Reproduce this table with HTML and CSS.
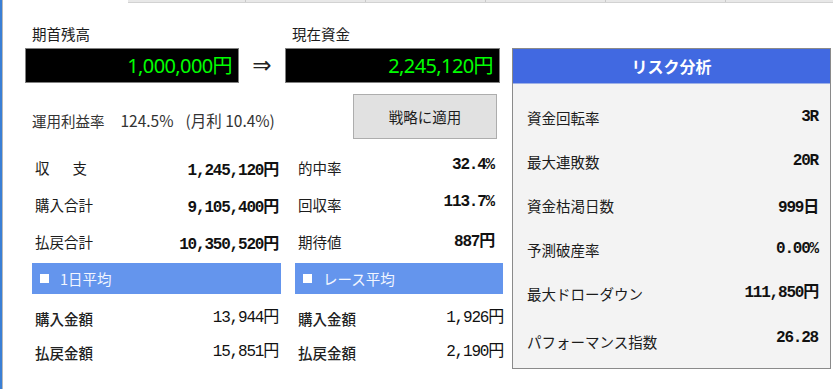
FILE: index.html
```html
<!DOCTYPE html>
<html lang="ja">
<head>
<meta charset="utf-8">
<title>資金管理</title>
<link rel="stylesheet" href="styles.css">
</head>
<body>
<div class="page">
  <div class="tabs">
    <div class="tab first"></div><div class="tab"></div><div class="tab"></div><div class="tab"></div><div class="tab"></div><div class="tab last"></div>
  </div>
  <div class="main">
    <div class="left">
      <div class="fund-row">
        <div class="field f1">
          <div class="field-label">期首残高</div>
          <div class="lcd">1,000,000円</div>
        </div>
        <div class="arrow">⇒</div>
        <div class="field f2">
          <div class="field-label">現在資金</div>
          <div class="lcd">2,245,120円</div>
        </div>
      </div>
      <div class="rate-row">
        <div class="rate"><span class="rate-lbl">運用利益率</span><span class="rate-num">124.5%</span><span class="rate-sub">(月利 10.4%)</span></div>
        <button class="apply">戦略に適用</button>
      </div>
      <div class="stats">
        <div class="stat c1"><span class="lbl">収<span class="sp"></span>支</span><span class="val b">1,245,120円</span></div>
        <div class="stat c2"><span class="lbl">的中率</span><span class="val b up">32.4%</span></div>
        <div class="stat c1"><span class="lbl">購入合計</span><span class="val b">9,105,400円</span></div>
        <div class="stat c2"><span class="lbl">回収率</span><span class="val b up">113.7%</span></div>
        <div class="stat c1"><span class="lbl">払戻合計</span><span class="val b">10,350,520円</span></div>
        <div class="stat c2"><span class="lbl">期待値</span><span class="val b up">887円</span></div>
      </div>
      <div class="avg-heads">
        <div class="bar b1"><span class="sq"></span>1日平均</div>
        <div class="bar b2"><span class="sq"></span>レース平均</div>
      </div>
      <div class="avgs">
        <div class="stat a1"><span class="lbl">購入金額</span><span class="val up">13,944円</span></div>
        <div class="stat a2"><span class="lbl">購入金額</span><span class="val up">1,926円</span></div>
        <div class="stat a1"><span class="lbl">払戻金額</span><span class="val up">15,851円</span></div>
        <div class="stat a2"><span class="lbl">払戻金額</span><span class="val up">2,190円</span></div>
      </div>
    </div>
    <div class="risk">
      <div class="risk-head">リスク分析</div>
      <div class="risk-body">
        <div class="rrow"><span class="lbl">資金回転率</span><span class="val b">3R</span></div>
        <div class="rrow"><span class="lbl">最大連敗数</span><span class="val b">20R</span></div>
        <div class="rrow"><span class="lbl">資金枯渇日数</span><span class="val b">999日</span></div>
        <div class="rrow"><span class="lbl">予測破産率</span><span class="val b">0.00%</span></div>
        <div class="rrow"><span class="lbl">最大ドローダウン</span><span class="val b up">111,850円</span></div>
        <div class="rrow last"><span class="lbl">パフォーマンス指数</span><span class="val b up">26.28</span></div>
      </div>
    </div>
  </div>
</div>
</body>
</html>
```

FILE: styles.css
```css
* { box-sizing: border-box; }
html, body { margin: 0; padding: 0; background: #ffffff; }
body {
  width: 833px;
  height: 389px;
  overflow: hidden;
  font-family: "Noto Sans CJK JP", "Noto Sans", sans-serif;
  font-size: 14.5px;
  color: #1c1c1c;
}
.page {
  height: 389px;
  border-left: 2px solid #3a7fd5;
  box-shadow: inset 1px 0 0 #b9b9b9;
}
.tabs {
  display: flex;
  height: 3px;
  margin-left: 126px;
  background: #e8e8e8;
  border-bottom: 1px solid #d2d2d2;
}
.tab { width: 120px; border-left: 1px solid #c9c9c9; }
.tab.first { width: 117px; border-left: none; }
.tab.last { flex: 1; }

.main {
  display: flex;
  padding: 21px 0 0 23px;
  gap: 9px;
}
.left { width: 478px; }

.fund-row { display: flex; align-items: flex-end; }
.field { display: flex; flex-direction: column; }
.f1 { width: 214px; }
.f2 { width: 215px; }
.field-label {
  height: 20px;
  line-height: 20px;
  padding-left: 7px;
  margin-bottom: 4px;
}
.lcd {
  height: 35px;
  background: #000;
  border: 1px solid #808080;
  color: #00ff00;
  font-family: "Noto Sans", "Noto Sans CJK JP", sans-serif;
  font-size: 20px;
  letter-spacing: -0.6px;
  line-height: 33px;
  text-align: right;
  padding-right: 6px;
}
.arrow {
  width: 46px;
  height: 35px;
  line-height: 35px;
  text-align: center;
  font-size: 23px;
  font-family: "DejaVu Sans", sans-serif;
  color: #222;
}

.rate-row {
  display: flex;
  align-items: center;
  height: 45px;
  margin-top: 11px;
}
.rate { display: flex; align-items: baseline; padding: 6px 0 0 7px; color: #333; }
.rate-lbl { font-size: 14.5px; }
.rate-num { font-size: 15.5px; margin-left: 16px; }
.rate-sub { font-size: 15.5px; margin-left: 12px; }
.apply {
  margin-left: auto;
  margin-right: 6px;
  width: 144px;
  height: 45px;
  background: #e1e1e1;
  border: 1px solid #adadad;
  font-family: "Noto Sans CJK JP", sans-serif;
  font-size: 14.5px;
  color: #1c1c1c;
  padding: 0;
}

.stats {
  display: grid;
  grid-template-columns: 252px 195px;
  grid-auto-rows: 37px;
  column-gap: 21px;
  margin-top: 10px;
}
.stat { display: flex; align-items: center; justify-content: space-between; }
.stat.c1 { padding-left: 10px; }
.sp { display: inline-block; width: 23px; }
.val {
  font-family: "Liberation Mono", "Noto Sans CJK JP", monospace;
  font-size: 16px;
  letter-spacing: -1.2px;
  margin-right: -1px;
  color: #111;
}
.val.b { font-weight: bold; }
.val.up { position: relative; top: -3px; }

.avg-heads {
  display: flex;
  gap: 14px;
  margin-top: 3px;
  padding-left: 7px;
}
.bar {
  height: 31px;
  background: #6495ed;
  color: #f2f6ff;
  font-size: 14.5px;
  display: flex;
  align-items: center;
}
.b1 { width: 249px; }
.b2 { width: 208px; }
.sq {
  width: 9px;
  height: 9px;
  background: #ffffff;
  margin: 0 11px 0 8px;
}

.avgs {
  display: grid;
  grid-template-columns: 252px 204px;
  grid-auto-rows: 34px;
  column-gap: 21px;
  margin-top: 7px;
}
.stat.a1 { padding-left: 10px; }
.avgs .lbl { font-weight: 500; color: #222; }

.risk {
  width: 319px;
  height: 321px;
  margin-top: 24px;
  background: #f3f3f3;
  border: 1px solid #8a8a8a;
}
.risk-head {
  height: 35px;
  background: #4169e1;
  border-bottom: 1px solid #9db0e6;
  color: #ffffff;
  font-weight: bold;
  font-size: 16px;
  text-align: center;
  line-height: 34px;
}
.risk-body { padding: 11px 13px 0 14px; }
.rrow {
  height: 44px;
  display: flex;
  align-items: center;
  justify-content: space-between;
}
.rrow.last { height: 48px; padding-top: 4px; }
.rrow .val { font-size: 16px; }
```
